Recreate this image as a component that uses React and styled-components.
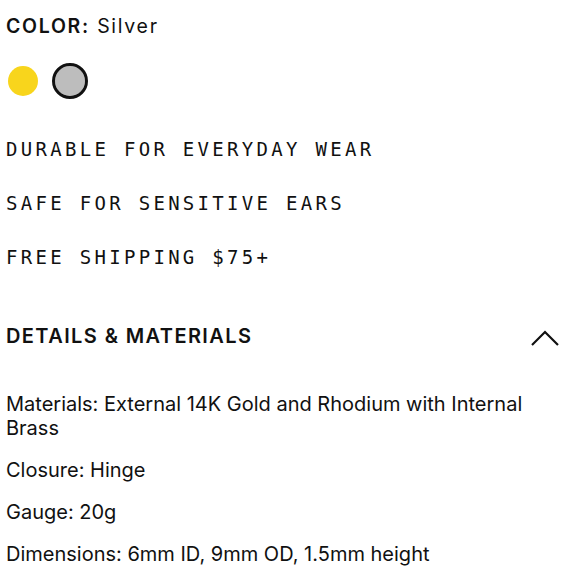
import React from 'react';
import styled, { createGlobalStyle } from 'styled-components';

const GlobalStyle = createGlobalStyle`
  body {
    margin: 0;
    background: #fff;
    color: #111;
    font-family: Inter, "Noto Sans", sans-serif;
  }
`;

const Page = styled.div`
  width: 580px;
  height: 580px;
  overflow: hidden;
  padding: 14px 21px 0 6px;
  box-sizing: border-box;
`;

const ColorLabel = styled.div`
  font-size: 19.5px;
  line-height: 24px;
  letter-spacing: 1.7px;

  strong {
    font-weight: 600;
  }
`;

const Swatches = styled.div`
  display: flex;
  align-items: center;
  gap: 11px;
  margin-top: 25px;
  margin-left: -1px;
`;

const Swatch = styled.button`
  width: 36px;
  height: 36px;
  padding: 0;
  border-radius: 50%;
  border: 3px solid ${(p) => (p.$active ? '#111' : 'transparent')};
  background: ${(p) => p.$color};
  background-clip: padding-box;
  box-sizing: border-box;
  cursor: pointer;
`;

const Features = styled.ul`
  list-style: none;
  margin: 38px 0 0;
  padding: 0;
  display: flex;
  flex-direction: column;
  gap: 30px;
`;

const Feature = styled.li`
  font-family: "DejaVu Sans Mono", "Liberation Mono", monospace;
  font-size: 19px;
  line-height: 24px;
  letter-spacing: 3.3px;
`;

const AccordionHeader = styled.div`
  display: flex;
  align-items: center;
  justify-content: space-between;
  margin-top: 55px;
`;

const AccordionTitle = styled.h3`
  margin: 0;
  font-size: 20px;
  line-height: 24px;
  font-weight: 600;
  letter-spacing: 1.4px;
`;

const Chevron = styled.svg`
  width: 28px;
  height: 16px;
  margin-top: 4px;
`;

const Details = styled.div`
  margin-top: 44px;
  display: flex;
  flex-direction: column;
  gap: 18px;
`;

const DetailLine = styled.p`
  margin: 0;
  font-size: 20px;
  line-height: 24px;
  letter-spacing: 0;
`;

const features = ['DURABLE FOR EVERYDAY WEAR', 'SAFE FOR SENSITIVE EARS', 'FREE SHIPPING $75+'];

const details = [
  'Materials: External 14K Gold and Rhodium with Internal Brass',
  'Closure: Hinge',
  'Gauge: 20g',
  'Dimensions: 6mm ID, 9mm OD, 1.5mm height',
];

export default function App() {
  return (
    <Page>
      <GlobalStyle />
      <ColorLabel>
        <strong>COLOR:</strong> Silver
      </ColorLabel>
      <Swatches>
        <Swatch $color="#f8d51c" aria-label="Gold" />
        <Swatch $color="#bdbdbd" $active aria-label="Silver" />
      </Swatches>
      <Features>
        {features.map((f) => (
          <Feature key={f}>{f}</Feature>
        ))}
      </Features>
      <AccordionHeader>
        <AccordionTitle>DETAILS &amp; MATERIALS</AccordionTitle>
        <Chevron viewBox="0 0 28 16" fill="none" stroke="#111" strokeWidth="2.2">
          <path d="M1 15 L14 2 L27 15" />
        </Chevron>
      </AccordionHeader>
      <Details>
        {details.map((d) => (
          <DetailLine key={d}>{d}</DetailLine>
        ))}
      </Details>
    </Page>
  );
}
